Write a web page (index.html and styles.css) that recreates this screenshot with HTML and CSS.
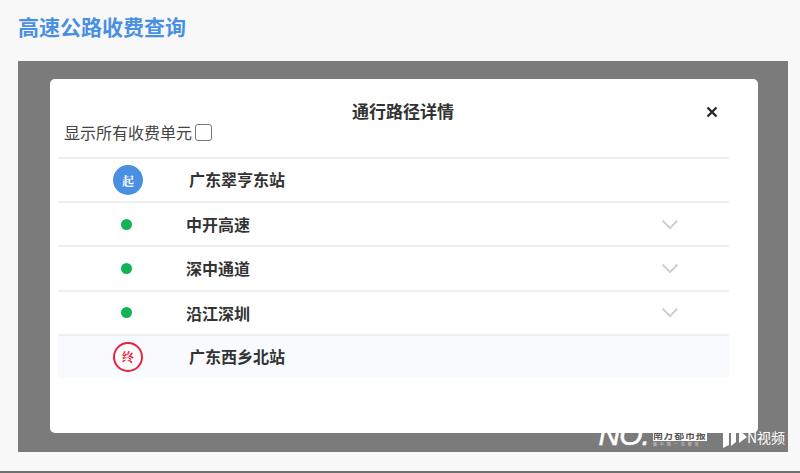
FILE: index.html
```html
<!DOCTYPE html>
<html lang="zh">
<head>
<meta charset="utf-8">
<title>高速公路收费查询</title>
<link rel="stylesheet" href="styles.css">
</head>
<body>
<div class="page">
  <h1 class="title">高速公路收费查询</h1>
  <div class="overlay">
    <div class="mark">
      <span class="mark-no">NO.</span>
      <span class="mark-name"><span class="mark-cn">南方都市报</span><span class="mark-sub">做中国一流智库</span></span>
      <svg class="mark-logo" width="28" height="24" viewBox="0 0 28 24"><path d="M2 8h6v12l-6 3zM10 4l5-3v16l-5 4zM18 5l8 7-8 6z" fill="#fff"/></svg>
      <span class="mark-video">N视频</span>
    </div>
    <div class="modal">
      <div class="modal-head">
        <div class="modal-title">通行路径详情</div>
        <svg class="close" width="12" height="12" viewBox="0 0 12 12"><path d="M1.5 1.5l9 9M10.5 1.5l-9 9" stroke="#222" stroke-width="2.2" fill="none"/></svg>
      </div>
      <label class="toggle">显示所有收费单元<span class="box"></span></label>
      <div class="rows">
        <div class="row">
          <div class="col-mark"><span class="badge badge-start">起</span></div>
          <div class="name name-station">广东翠亨东站</div>
        </div>
        <div class="row">
          <div class="col-mark"><span class="dot"></span></div>
          <div class="name">中开高速</div>
          <svg class="chev" width="18" height="11" viewBox="0 0 18 11"><path d="M1.5 1.5L9 9l7.500-7.500" stroke="#d0d0d0" stroke-width="2" fill="none"/></svg>
        </div>
        <div class="row">
          <div class="col-mark"><span class="dot"></span></div>
          <div class="name">深中通道</div>
          <svg class="chev" width="18" height="11" viewBox="0 0 18 11"><path d="M1.5 1.5L9 9l7.500-7.500" stroke="#d0d0d0" stroke-width="2" fill="none"/></svg>
        </div>
        <div class="row">
          <div class="col-mark"><span class="dot"></span></div>
          <div class="name">沿江深圳</div>
          <svg class="chev" width="18" height="11" viewBox="0 0 18 11"><path d="M1.5 1.5L9 9l7.500-7.500" stroke="#d0d0d0" stroke-width="2" fill="none"/></svg>
        </div>
        <div class="row row-end">
          <div class="col-mark"><span class="badge badge-end">终</span></div>
          <div class="name name-station">广东西乡北站</div>
        </div>
      </div>
    </div>
  </div>
</div>
</body>
</html>
```
FILE: styles.css
```css
* { box-sizing: border-box; }
html, body { margin: 0; padding: 0; }
body {
  width: 800px;
  height: 473px;
  overflow: hidden;
  background: #f8f8f8;
  font-family: "Noto Sans CJK SC", "Noto Sans", sans-serif;
}
.page {
  height: 473px;
  padding: 0 12px 0 18px;
  border-bottom: 2px solid #6e6e6e;
}
.title {
  margin: 0;
  height: 61px;
  padding-top: 10px;
  font-size: 21px;
  line-height: 32px;
  font-weight: 700;
  color: #4a90e2;
}
.overlay {
  position: relative;
  height: 391px;
  padding: 18px 30px 0 32px;
  background: #7b7b7b;
}
.modal {
  position: relative;
  height: 354px;
  padding: 0 29px 0 8px;
  background: #fff;
  border-radius: 5px;
}
.modal-head {
  position: relative;
  height: 42px;
  padding-top: 19px;
  text-align: center;
}
.modal-title {
  margin-left: 19px;
  font-size: 17px;
  line-height: 25px;
  font-weight: 700;
  color: #333;
}
.close {
  position: absolute;
  right: 11px;
  top: 27px;
}
.toggle {
  display: flex;
  align-items: center;
  height: 22px;
  padding-left: 6px;
  font-size: 16px;
  line-height: 22px;
  color: #444;
}
.box {
  width: 17px;
  height: 17px;
  margin-left: 3px;
  background: #fff;
  border: 1px solid #777;
  border-radius: 3px;
}
.rows {
  margin-top: 14px;
}
.row {
  display: flex;
  align-items: center;
  height: 44.200px;
  border-top: 2px solid #efefef;
}
.row-end {
  height: 44px;
  background: #f8fafd;
}
.col-mark {
  display: flex;
  justify-content: center;
  width: 128px;
  padding-left: 12px;
}
.badge {
  display: flex;
  align-items: center;
  justify-content: center;
  width: 30px;
  height: 30px;
  border-radius: 50%;
  font-family: "Noto Serif CJK SC", "Noto Sans CJK SC", serif;
  font-size: 12px;
  font-weight: 700;
}
.badge-start { background: #4a90e2; color: #fff; }
.badge-end { background: #fff; color: #e8213f; border: 2px solid #e8213f; }
.dot {
  width: 11px;
  height: 11px;
  margin: 0 4px 0 0;
  border-radius: 50%;
  background: #12b354;
}
.name {
  flex: 1;
  font-size: 16px;
  line-height: 22px;
  font-weight: 700;
  color: #333;
}
.name-station { padding: 0 0 2px 3px; }
.chev { margin-right: 50px; }
.mark {
  position: absolute;
  right: 3px;
  bottom: 3px;
  display: flex;
  align-items: flex-end;
  height: 32px;
  color: #fff;
}
.mark-no {
  font-family: "Liberation Sans", sans-serif;
  font-style: italic;
  font-size: 30px;
  line-height: 29px;
  letter-spacing: -1px;
  -webkit-text-stroke: 0.500px #fff;
}
.mark-name {
  display: flex;
  flex-direction: column;
  width: 54px;
  margin: 0 14px 2px 4px;
}
.mark-cn {
  font-size: 10px;
  line-height: 12px;
  letter-spacing: 0.700px;
  font-weight: 700;
  background: #fff;
  color: #555;
  white-space: nowrap;
}
.mark-sub {
  font-size: 4px;
  line-height: 6px;
  letter-spacing: 3px;
  white-space: nowrap;
  color: #ddd;
}
.mark-logo { margin-right: -2px; }
.mark-video {
  font-size: 14px;
  line-height: 24px;
}
```
